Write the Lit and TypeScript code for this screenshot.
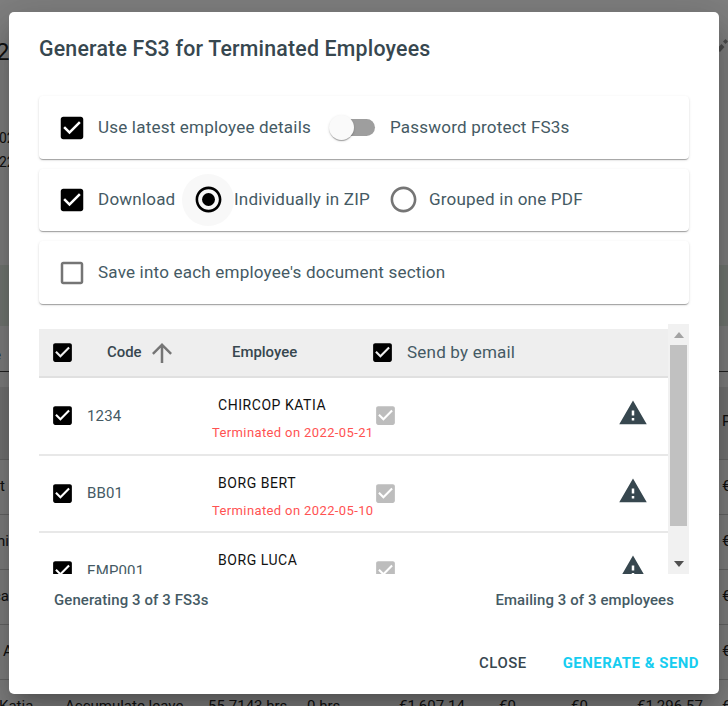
import { LitElement, html, css, svg } from "lit";
import { customElement } from "lit/decorators.js";
import { styleMap } from "lit/directives/style-map.js";

const CHECKED = "M19 3H5c-1.11 0-2 .9-2 2v14c0 1.1.89 2 2 2h14c1.11 0 2-.9 2-2V5c0-1.1-.89-2-2-2zm-9 14l-5-5 1.41-1.41L10 14.17l7.59-7.59L19 8l-9 9z";
const UNCHECKED = "M19 5v14H5V5h14m0-2H5c-1.1 0-2 .9-2 2v14c0 1.1.9 2 2 2h14c1.1 0 2-.9 2-2V5c0-1.1-.9-2-2-2z";
const RING = "M12 2C6.48 2 2 6.48 2 12s4.48 10 10 10 10-4.48 10-10S17.52 2 12 2zm0 18c-4.42 0-8-3.58-8-8s3.58-8 8-8 8 3.58 8 8-3.58 8-8 8z";
const WARN = "M1 21h22L12 2 1 21zm12-3h-2v-2h2v2zm0-4h-2v-4h2v4z";
const ARROW = "M4 12l1.41 1.41L11 7.83V20h2V7.83l5.58 5.59L20 12l-8-8-8 8z";

const icon = (cls: string, d: string, extra: unknown = null) =>
  html`<svg class=${cls} viewBox="0 0 24 24" aria-hidden="true"><path d=${d}></path>${extra}</svg>`;

const employees = [
  { code: "1234", name: "CHIRCOP KATIA", note: "Terminated on 2022-05-21" },
  { code: "BB01", name: "BORG BERT", note: "Terminated on 2022-05-10" },
  { code: "EMP001", name: "BORG LUCA", note: "" },
];

const backRows = [
  { a: "t", x: 0, b: "", c: "", d: "", e: "", f: "", g: "", h: "", i: "€" },
  { a: "hi", x: -3, b: "", c: "", d: "", e: "", f: "", g: "", h: "", i: "€" },
  { a: "ca", x: -7, b: "", c: "", d: "", e: "", f: "", g: "", h: "", i: "€" },
  { a: "A", x: 3, b: "", c: "", d: "", e: "", f: "", g: "", h: "", i: "€" },
  { a: "Katia", x: -1, b: "Accumulate leave", c: "55.7143 hrs", d: "0 hrs", e: "€1,607.14", f: "€0", g: "€0", h: "€1,296.57", i: "€" },
];

@customElement("app-root")
export class AppRoot extends LitElement {
  static styles = css`
    :host { display: block; font-family: Roboto, "Noto Sans", sans-serif; }
    * { box-sizing: border-box; }
    .page { position: relative; width: 728px; height: 706px; overflow: hidden; background: #fff; color: #222; }

    /* page behind the dialog */
    .back { display: flex; flex-direction: column; height: 706px; font-size: 15px; }
    .back > * { flex: none; }
    .back-top { height: 265px; display: flex; flex-direction: column; }
    .back-titlebar { display: flex; justify-content: space-between; margin-top: 38px; }
    .back-title { font-size: 24px; line-height: 28px; margin-left: -4px; }
    .back-line { font-size: 14px; line-height: 24px; margin-left: -1px; }
    .back-first { margin-top: 60px; }
    .back-icon { width: 10px; height: 14px; fill: #999; }
    .back-band { height: 61px; background: #e6f0e6; }
    .back-tabs { height: 46px; border-bottom: 1px solid #444; line-height: 58px; margin-left: -7px; }
    .back-gap { height: 15px; }
    .back-head { height: 73px; background: #e8e8e8; border-bottom: 1px solid #ccc; display: flex; justify-content: flex-end; align-items: center; padding-bottom: 4px; }
    .back-head span { width: 6px; overflow: hidden; }
    .back-row { height: 55px; display: grid; grid-template-columns: 65px 143px 99px 92px 100px 72px 66px 85px 1fr; align-items: center; border-bottom: 1px solid #ccc; white-space: nowrap; padding-bottom: 2px; }

    .scrim { position: absolute; inset: 0; background: rgba(0, 0, 0, 0.5); }

    /* dialog */
    .dialog {
      position: absolute; left: 9px; top: 12px; width: 710px; height: 682px;
      background: #fff; border-radius: 5px; padding: 0 30px;
      display: flex; flex-direction: column; color: #455a64;
      box-shadow: 0 11px 15px -7px rgba(0,0,0,.2), 0 24px 38px 3px rgba(0,0,0,.14), 0 9px 46px 8px rgba(0,0,0,.12);
    }
    h1 { margin: 0; height: 84px; padding-top: 23px; font-size: 21.33px; line-height: 28px; font-weight: 500; letter-spacing: 0.2px; color: #37474f; white-space: nowrap; }

    .card {
      height: 63px; margin-bottom: 10px; background: #fff; border-radius: 4px;
      display: flex; align-items: center; padding-left: 18px; font-size: 17.07px; line-height: 22px; letter-spacing: 0.18px;
      box-shadow: 0 2px 1px -1px rgba(0,0,0,.2), 0 1px 1px 0 rgba(0,0,0,.14), 0 1px 3px 0 rgba(0,0,0,.12);
      white-space: nowrap;
    }
    .card.second { height: 62px; padding-bottom: 1px; }
    .txt { padding-bottom: 2px; }
    .cb { width: 30px; height: 30px; flex: none; fill: #000; display: block; }
    .cb.off { fill: #757575; }
    .cb.small { width: 25px; height: 25px; }
    .cb.dis { fill: #bdbdbd; }
    .lbl { margin-left: 11px; }

    .switch { position: relative; width: 45px; height: 17px; margin-left: 19px; background: #9e9e9e; border-radius: 9px; flex: none; }
    .switch::before {
      content: ""; position: absolute; left: -1px; top: -4px; width: 25px; height: 25px; border-radius: 50%;
      background: #fafafa; box-shadow: 0 2px 1px -1px rgba(0,0,0,.2), 0 1px 1px 0 rgba(0,0,0,.14), 0 1px 3px 0 rgba(0,0,0,.12);
    }
    .switch-lbl { margin-left: 15px; }

    .radio { width: 52px; height: 52px; flex: none; display: flex; align-items: center; justify-content: center; }
    .radio.on { margin-left: 6.6px; background: #f8f8f8; border-radius: 50%; }
    .radio.off { margin-left: 7px; }
    .radio svg { width: 31px; height: 31px; display: block; fill: #000; }
    .radio.off svg { fill: #757575; }

    /* table */
    .table-wrap { display: flex; height: 250px; margin-top: 10px; flex: none; }
    .table { width: 629px; padding-top: 5px; overflow: hidden; }
    .thead { height: 49px; background: #eee; border-bottom: 2px solid #e0e0e0; display: grid; grid-template-columns: 57px 125px 138px 37px 1fr; padding-left: 11px; align-items: center; font-size: 14.93px; font-weight: 500; color: #37474f; }
    .thead .code { display: flex; align-items: center; gap: 9px; }
    .thead .arrow { width: 30px; height: 30px; fill: #757575; }
    .thead .code span { width: 31px; padding-bottom: 2px; }
    .thead .email { font-size: 17.07px; font-weight: 400; letter-spacing: 0.18px; color: #455a64; padding-bottom: 1px; }
    .thead .emp { padding-bottom: 2px; }
    .row { height: 77.5px; display: grid; grid-template-columns: 37px 125px 161px 25px 1fr 30px; padding: 0 20px 0 11px; align-items: center; border-bottom: 2px solid #e8e8e8; font-size: 15px; letter-spacing: 0.15px; }
    .emp-cell { display: flex; flex-direction: column; height: 100%; white-space: nowrap; }
    .name { margin: 18px 0 0 6px; font-size: 14px; line-height: 18px; font-weight: 400; letter-spacing: 0.55px; color: #111; }
    .note { margin-top: 10px; font-size: 13px; line-height: 18px; letter-spacing: 0.38px; color: #ff5252; }
    .warn { grid-column: 6; width: 30px; height: 30px; fill: #37474f; margin-top: -5px; display: block; }

    .scrollbar { width: 21px; background: #f1f1f1; display: flex; flex-direction: column; align-items: center; }
    .sb-btn { height: 21px; flex: none; display: flex; align-items: center; justify-content: center; }
    .sb-btn svg { width: 10px; height: 6px; display: block; }
    .sb-up { fill: #a3a3a3; }
    .sb-down { fill: #505050; }
    .sb-thumb { width: 17px; height: 181px; background: #c1c1c1; flex: none; }
    .sb-space { flex: 1; }

    .totals { display: flex; justify-content: space-between; padding: 16px 15px 0; height: 46px; font-size: 14.93px; line-height: 20px; font-weight: 500; letter-spacing: 0.12px; color: #455a64; white-space: nowrap; }

    .actions { display: flex; justify-content: flex-end; gap: 36px; margin: 33px -10px 0 0; font-size: 14.93px; line-height: 20px; font-weight: 500; letter-spacing: 0.5px; white-space: nowrap; }
    .close { color: #37474f; }
    .go { color: #16cdf0; font-weight: 700; letter-spacing: 0.5px; }
  `;

  render() {
    return html`<div class="page">
      <div class="back">
        <div class="back-top">
          <div class="back-titlebar">
            <div class="back-title">2</div>
            <svg class="back-icon" viewBox="0 0 10 14"><path d="M0 9.5l3.5-3.5 3 3L2 14l-2-1.5zM5 3.5L7.5 1 10 3.5 7.5 6z"></path></svg>
          </div>
          <div class="back-line back-first">02</div>
          <div class="back-line">22</div>
        </div>
        <div class="back-band"></div>
        <div class="back-tabs">e</div>
        <div class="back-gap"></div>
        <div class="back-head"><span>P</span></div>
        ${backRows.map(
          (r) => html`<div class="back-row">
            <span style=${styleMap({ marginLeft: `${r.x}px` })}>${r.a}</span><span>${r.b}</span><span>${r.c}</span><span>${r.d}</span><span>${r.e}</span><span>${r.f}</span><span>${r.g}</span><span>${r.h}</span><span>${r.i}</span>
          </div>`
        )}
      </div>
      <div class="scrim"></div>

      <div class="dialog" role="dialog">
        <h1>Generate FS3 for Terminated Employees</h1>

        <div class="card">
          ${icon("cb", CHECKED)}
          <span class="lbl txt">Use latest employee details</span>
          <span class="switch"></span>
          <span class="switch-lbl txt">Password protect FS3s</span>
        </div>
        <div class="card second">
          ${icon("cb", CHECKED)}
          <span class="lbl txt">Download</span>
          <span class="radio on">${icon("", RING, svg`<circle cx="12" cy="12" r="5"></circle>`)}</span>
          <span class="txt">Individually in ZIP</span>
          <span class="radio off">${icon("", RING)}</span>
          <span class="txt">Grouped in one PDF</span>
        </div>
        <div class="card">
          ${icon("cb off", UNCHECKED)}
          <span class="lbl txt">Save into each employee's document section</span>
        </div>

        <div class="table-wrap">
          <div class="table">
            <div class="thead">
              ${icon("cb small", CHECKED)}
              <div class="code"><span>Code</span>${icon("arrow", ARROW)}</div>
              <div class="emp">Employee</div>
              ${icon("cb small", CHECKED)}
              <div class="email">Send by email</div>
            </div>
            ${employees.map(
              (e) => html`<div class="row">
                ${icon("cb small", CHECKED)}
                <div>${e.code}</div>
                <div class="emp-cell">
                  <div class="name">${e.name}</div>
                  ${e.note ? html`<div class="note">${e.note}</div>` : null}
                </div>
                ${icon("cb small dis", CHECKED)}
                ${icon("warn", WARN)}
              </div>`
            )}
          </div>
          <div class="scrollbar">
            <div class="sb-btn"><svg class="sb-up" viewBox="0 0 10 6"><path d="M5 0l5 6H0z"></path></svg></div>
            <div class="sb-thumb"></div>
            <div class="sb-space"></div>
            <div class="sb-btn"><svg class="sb-down" viewBox="0 0 10 6"><path d="M0 0h10L5 6z"></path></svg></div>
          </div>
        </div>

        <div class="totals">
          <span>Generating 3 of 3 FS3s</span>
          <span>Emailing 3 of 3 employees</span>
        </div>

        <div class="actions">
          <span class="close">CLOSE</span>
          <span class="go">GENERATE &amp; SEND</span>
        </div>
      </div>
    </div>`;
  }
}
